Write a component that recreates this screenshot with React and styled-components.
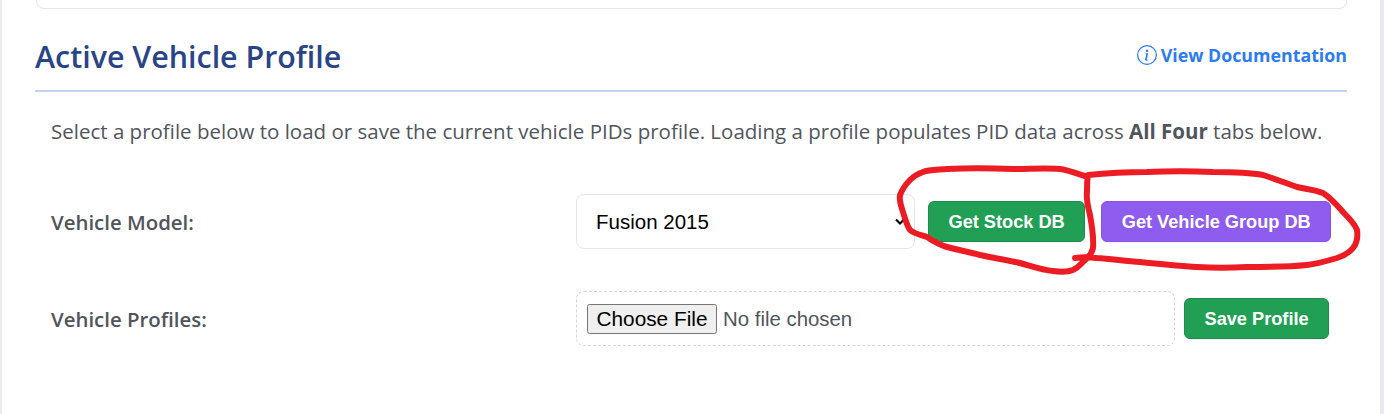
import React from "react";
import styled, { createGlobalStyle } from "styled-components";
import { BsInfoCircle } from "react-icons/bs";

const GlobalStyle = createGlobalStyle`
  html, body {
    margin: 0;
    padding: 0;
    height: 100%;
    overflow: hidden;
    background: #e9e9f1;
  }
  #root {
    height: 100%;
  }
`;

const App = () => {
  return (
    <>
      <GlobalStyle />
      <Page>
        <PrevCard />
        <Header>
          <Title>Active Vehicle Profile</Title>
          <DocLink href="#">
            <BsInfoCircle size={20} />
            View Documentation
          </DocLink>
        </Header>
        <Description>
          Select a profile below to load or save the current vehicle PIDs
          profile. Loading a profile populates PID data across{" "}
          <strong>All Four</strong> tabs below.
        </Description>
        <Row $top={50}>
          <Label>Vehicle Model:</Label>
          <Select defaultValue="fusion">
            <option value="fusion">Fusion 2015</option>
          </Select>
          <Button $left={13}>Get Stock DB</Button>
          <Button $left={16} $purple>
            Get Vehicle Group DB
          </Button>
        </Row>
        <Row $top={42}>
          <Label>Vehicle Profiles:</Label>
          <FileBox>
            <input type="file" />
          </FileBox>
          <Button $left={9}>Save Profile</Button>
        </Row>
        <Scribble viewBox="0 0 1384 414">
          <path d="M1088 177 C1078 174 1068 170 1060 169 C1045 168 1030 169 1013 169 C990 168 965 168 947 169 C935 170 928 170 923 172 C917 174 913 177 910 180 C905 185 902 190 900 195 C899 201 901 206 903 212 C905 219 907 226 910 230 C915 234 921 235 927 237 C933 241 940 245 947 247 C958 250 969 252 980 255 C993 258 1007 260 1020 263 C1031 266 1042 270 1053 271 C1061 272 1068 272 1073 270 C1078 268 1080 265 1083 262 C1088 258 1092 254 1093 248 C1094 237 1092 226 1090 215 C1088 207 1086 200 1087 192 C1087 186 1087 180 1088 175 C1107 173 1127 172 1147 172 C1169 171 1191 171 1213 172 C1230 172 1247 172 1263 175 C1275 179 1286 183 1297 187 C1306 189 1316 190 1323 193 C1331 198 1337 205 1343 212 C1349 218 1355 224 1357 230 C1358 237 1357 243 1353 248 C1349 253 1343 256 1337 258 C1327 261 1317 264 1307 265 C1287 267 1267 267 1247 267 C1230 268 1214 268 1197 267 C1178 266 1159 264 1140 262 C1126 261 1111 259 1097 258 C1089 257 1082 257 1075 258" />
        </Scribble>
      </Page>
    </>
  );
};

const Page = styled.div`
  position: relative;
  box-sizing: border-box;
  height: 414px;
  margin: 0 4px 0 2px;
  padding: 0 35px 0 33px;
  background: #fff;
  font-family: "Open Sans", "Noto Sans", sans-serif;
  overflow: hidden;
`;

const PrevCard = styled.div`
  height: 8px;
  margin: 0 -2px 0 1px;
  border: 1px solid #e3e6f0;
  border-top: none;
  border-radius: 0 0 8px 8px;
`;

const Header = styled.div`
  box-sizing: border-box;
  display: flex;
  align-items: center;
  justify-content: space-between;
  height: 83px;
  padding-top: 13px;
  margin-right: -2px;
  border-bottom: 2px solid #c5d2ef;
`;

const Title = styled.h2`
  margin: 0;
  font-size: 30.4px;
  font-weight: 600;
  color: #2a4488;
`;

const DocLink = styled.a`
  display: flex;
  align-items: center;
  gap: 4px;
  margin-top: -3px;
  font-size: 17.8px;
  font-weight: 700;
  color: #2c7bf5;
  text-decoration: none;
`;

const Description = styled.p`
  margin: 27px 0 0 16px;
  font-size: 20.5px;
  line-height: 25px;
  color: #50555b;
  white-space: nowrap;

  strong {
    font-weight: 700;
  }
`;

const Row = styled.div`
  display: flex;
  align-items: center;
  margin: ${(p) => p.$top}px 0 0 16px;
`;

const Label = styled.label`
  width: 525px;
  font-size: 20.4px;
  font-weight: 600;
  color: #50555b;
`;

const Select = styled.select`
  box-sizing: border-box;
  width: 339px;
  height: 55px;
  padding: 0 20px 0 19px;
  appearance: none;
  border: 1px solid #e3e6ee;
  border-radius: 8px;
  background: #fff url("data:image/svg+xml,%3Csvg xmlns='http://www.w3.org/2000/svg' width='10' height='7' viewBox='0 0 10 7'%3E%3Cpath d='M1 1.5l4 4 4-4' fill='none' stroke='%23000' stroke-width='2'/%3E%3C/svg%3E") no-repeat right 9px center;
  font-family: "Liberation Sans", Arial, sans-serif;
  font-size: 20.5px;
  color: #000;
`;

const FileBox = styled.div`
  box-sizing: border-box;
  display: flex;
  align-items: center;
  width: 599px;
  height: 55px;
  padding: 0 10px;
  border: 1px dashed #d4d6dc;
  border-radius: 8px;

  input {
    font-family: "Liberation Sans", Arial, sans-serif;
    font-size: 20.4px;
    color: #50555b;
  }

  input::file-selector-button {
    width: 130px;
    margin-right: 6px;
    font-size: 20.8px;
  }
`;

const Button = styled.button`
  box-sizing: border-box;
  height: 41px;
  margin-left: ${(p) => p.$left}px;
  padding: 1px 19.5px 0;
  border: 1px solid ${(p) => (p.$purple ? "#8a52e8" : "#1d8a4e")};
  border-radius: 6px;
  background: ${(p) => (p.$purple ? "#8e5cee" : "#21a055")};
  box-shadow: 0 1px 2px rgba(0, 0, 0, 0.06);
  font-family: "Liberation Sans", Arial, sans-serif;
  font-size: 18.2px;
  font-weight: 700;
  color: #fff;
  white-space: nowrap;
`;

const Scribble = styled.svg`
  position: absolute;
  top: 0;
  left: -2px;
  width: 1384px;
  height: 414px;
  pointer-events: none;
  fill: none;

  path {
    stroke: #ed1c24;
    stroke-width: 6;
    stroke-linecap: round;
    stroke-linejoin: round;
  }
`;

export default App;
